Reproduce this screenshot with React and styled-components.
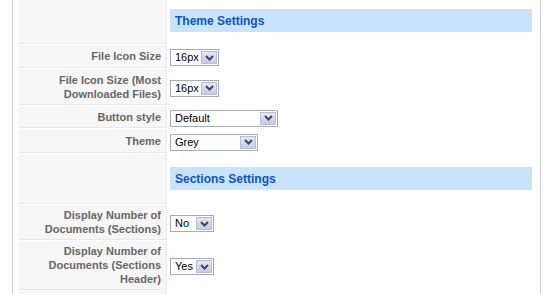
import React from "react";
import styled, { createGlobalStyle } from "styled-components";

const Global = createGlobalStyle`
  html, body { margin: 0; padding: 0; background: #fff; }
  body { font-family: "Liberation Sans", Arial, sans-serif; overflow: hidden; }
`;

const Panel = styled.div`
  box-sizing: border-box;
  width: 529px;
  margin-left: 12px;
  border-left: 1px solid #cccccc;
  border-right: 1px solid #cccccc;
  padding: 0 5px 0 6px;
`;

const Table = styled.div`
  display: flex;
  flex-direction: column;
  gap: 1px;
`;

const Row = styled.div`
  display: flex;
  align-items: stretch;
  height: ${(p) => p.$h}px;
`;

const Label = styled.div`
  box-sizing: border-box;
  width: 148px;
  flex: none;
  background: #f6f6f6;
  border-right: 1px solid #e9e9e9;
  border-bottom: 1px solid #e9e9e9;
  padding: 3px 5px 3px 4px;
  display: flex;
  align-items: center;
  justify-content: flex-end;
  text-align: right;
  color: #666666;
  font-size: 11px;
  font-weight: bold;
  line-height: 14px;
`;

const Value = styled.div`
  flex: 1;
  padding: ${(p) => (p.$header ? `${p.$top}px 3px 0 3px` : "0 3px")};
  display: flex;
  align-items: ${(p) => (p.$header ? "flex-start" : "center")};
`;

const SectionBar = styled.div`
  flex: 1;
  height: 23px;
  background: #cae3fd;
  color: #0b55c4;
  font-size: 12px;
  font-weight: bold;
  display: flex;
  align-items: center;
  padding-left: 5px;
`;

const SelectBox = styled.div`
  box-sizing: border-box;
  width: ${(p) => p.$width}px;
  height: 17px;
  margin-top: 2px;
  border: 1px solid #a5acb2;
  background: #fff;
  display: flex;
  align-items: stretch;
  font-size: 11px;
  color: #000;
`;

const SelectText = styled.span`
  flex: 1;
  padding-left: 4px;
  line-height: 15px;
  white-space: nowrap;
  overflow: hidden;
`;

const DropButton = styled.span`
  box-sizing: border-box;
  width: 16px;
  margin: 1px;
  border: 1px solid #b9bed6;
  background: linear-gradient(#e4e7f5, #c6cbe2);
  display: flex;
  align-items: center;
  justify-content: center;
`;

const Select = ({ value, width }) => (
  <SelectBox $width={width}>
    <SelectText>{value}</SelectText>
    <DropButton>
      <svg width="9" height="6" viewBox="0 0 9 6">
        <path d="M1 1 L4.5 4.5 L8 1" fill="none" stroke="#3c4668" strokeWidth="2" />
      </svg>
    </DropButton>
  </SelectBox>
);

const sections = [
  { type: "header", title: "Theme Settings", top: 9, h: 44 },
  { label: "File Icon Size", value: "16px", width: 49, h: 23 },
  { label: "File Icon Size (Most Downloaded Files)", value: "16px", width: 49, h: 36 },
  { label: "Button style", value: "Default", width: 108, h: 22 },
  { label: "Theme", value: "Grey", width: 88, h: 24 },
  { type: "header", title: "Sections Settings", top: 13, h: 50 },
  { label: "Display Number of Documents (Sections)", value: "No", width: 44, h: 35 },
  { label: "Display Number of Documents (Sections Header)", value: "Yes", width: 44, h: 49 },
  { label: "", value: "", width: 0, h: 30, empty: true },
];

export default function App() {
  return (
    <>
      <Global />
      <Panel>
        <Table>
          {sections.map((s, i) =>
            s.type === "header" ? (
              <Row key={i} $h={s.h}>
                <Label />
                <Value $header $top={s.top}>
                  <SectionBar>{s.title}</SectionBar>
                </Value>
              </Row>
            ) : (
              <Row key={i} $h={s.h}>
                <Label>{s.label}</Label>
                <Value>{!s.empty && <Select value={s.value} width={s.width} />}</Value>
              </Row>
            )
          )}
        </Table>
      </Panel>
    </>
  );
}
